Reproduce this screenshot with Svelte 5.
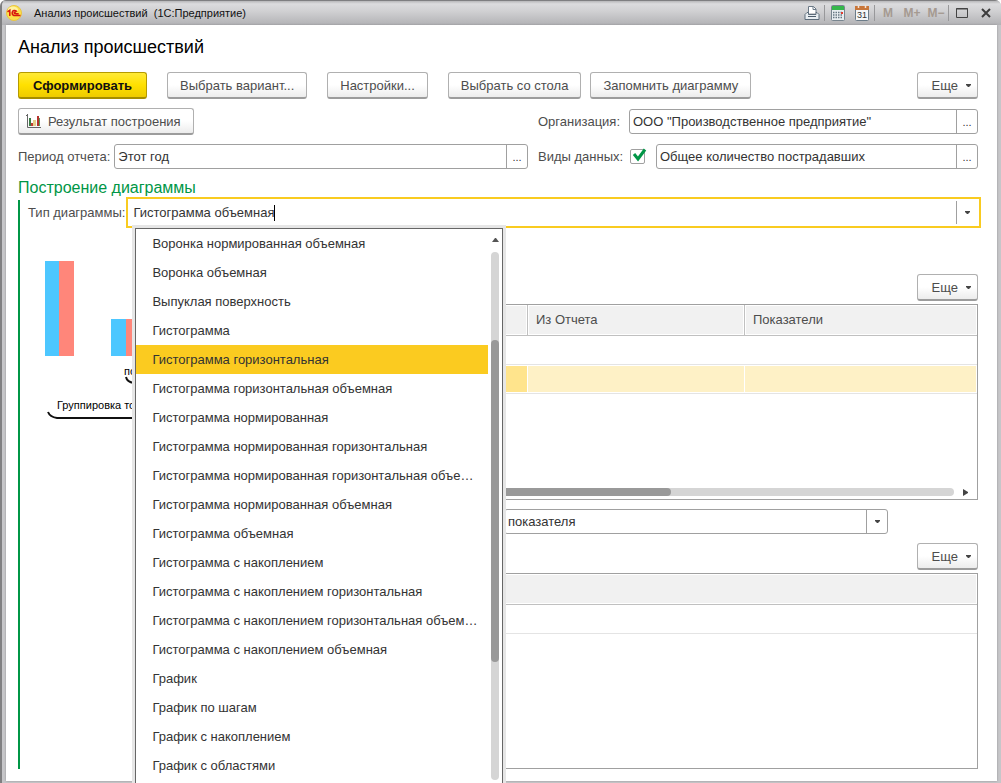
<script lang="ts">
	let chartType = $state('Гистограмма объемная');
	let organization = $state('ООО "Производственное предприятие"');
	let period = $state('Этот год');
	let dataKind = $state('Общее количество пострадавших');
	let indicator = $state('показателя');
	let useDataKind = $state(true);
	let activeIndex = $state(4);

	const chartTypes = [
		'Воронка нормированная объемная',
		'Воронка объемная',
		'Выпуклая поверхность',
		'Гистограмма',
		'Гистограмма горизонтальная',
		'Гистограмма горизонтальная объемная',
		'Гистограмма нормированная',
		'Гистограмма нормированная горизонтальная',
		'Гистограмма нормированная горизонтальная объе…',
		'Гистограмма нормированная объемная',
		'Гистограмма объемная',
		'Гистограмма с накоплением',
		'Гистограмма с накоплением горизонтальная',
		'Гистограмма с накоплением горизонтальная объем…',
		'Гистограмма с накоплением объемная',
		'График',
		'График по шагам',
		'График с накоплением',
		'График с областями'
	];

	function select(index: number) {
		activeIndex = index;
		chartType = chartTypes[index];
	}
</script>

{#snippet arrow()}
	<svg class="arrow" width="5" height="3" viewBox="0 0 5 3" aria-hidden="true">
		<path d="M0 0h5v1L3 3H2L0 1z" fill="#444" />
	</svg>
{/snippet}

{#snippet more()}
	<button class="btn more">Еще {@render arrow()}</button>
{/snippet}

<div class="window">
	<header class="titlebar">
		<svg class="logo" width="16" height="16" viewBox="0 0 16 16" aria-hidden="true">
			<circle cx="8" cy="8" r="7.5" fill="#fbe04a" stroke="#e9c440" />
			<ellipse cx="7" cy="4.5" rx="5" ry="3" fill="#fff3a0" />
			<path d="M1.500 6.800L3.800 5.200V11M10.800 6.800C10 4.800 6.200 5 6.200 8c0 2.200 1.500 2.600 3 2.600h5.300M9.800 7.500c-1-.8-1.800-.3-1.600.5.1.8 1 .8 2 .8h2.500" fill="none" stroke="#d8190f" stroke-width="1.500" />
		</svg>
		<span class="caption">Анализ происшествий&nbsp; (1С:Предприятие)</span>
		<div class="tools">
			<button class="tool" aria-label="Печать">
				<svg width="16" height="16" viewBox="0 0 16 16">
					<path d="M4.500 8V1.500h5l2.500 2.500v4" fill="#fff" stroke="#6a7886" />
					<path d="M9 1.500V4.500h3" fill="none" stroke="#6a7886" />
					<path d="M3 7.500h1.500v2h7.500v-2h1l2 2v5H1v-5z" fill="#e8edf1" stroke="#5d6c7a" />
					<path d="M4 11.500h8" stroke="#4d5c6a" />
				</svg>
			</button>
			<i class="sep"></i>
			<button class="tool" aria-label="Калькулятор">
				<svg width="14" height="16" viewBox="0 0 14 16">
					<rect x=".5" y=".5" width="13" height="15" rx="1" fill="#e8edf0" stroke="#78858f" />
					<path d="M1 1h12v4H1z" fill="#35b74b" />
					<path d="M2 7.500h10M2 10h10M2 12.500h10" stroke="#677783" stroke-width="1.500" stroke-dasharray="1.500 1" />
					<path d="M10 7h2v2h-2z" fill="#e23a2e" />
				</svg>
			</button>
			<button class="tool" aria-label="Календарь">
				<svg width="14" height="16" viewBox="0 0 14 16">
					<rect x=".5" y="1.500" width="13" height="14" rx="1" fill="#f5f7f8" stroke="#6c7c89" />
					<path d="M0 1h14v4H0z" fill="#c8763a" />
					<path d="M3.500 0v3M10.500 0v3" stroke="#f3e2d4" stroke-width="1.500" />
					<text x="7" y="13" text-anchor="middle" font-size="9" font-family="Liberation Sans, sans-serif" fill="#333">31</text>
				</svg>
			</button>
			<i class="sep"></i>
			<button class="memory">M</button>
			<button class="memory">M+</button>
			<button class="memory">M−</button>
			<i class="sep"></i>
			<button class="tool" aria-label="Развернуть">
				<svg width="12" height="10" viewBox="0 0 12 10"><path d="M.5 .5h11v9H.5z" fill="none" stroke="#444" /><path d="M0 1h12" stroke="#444" /></svg>
			</button>
			<button class="tool" aria-label="Закрыть">
				<svg width="10" height="10" viewBox="0 0 10 10"><path d="M1 1l8 8M9 1L1 9" stroke="#3c3c3c" stroke-width="2" /></svg>
			</button>
		</div>
	</header>

	<main class="form">
		<h1>Анализ происшествий</h1>

		<div class="commands">
			<button class="btn primary">Сформировать</button>
			<button class="btn">Выбрать вариант...</button>
			<button class="btn">Настройки...</button>
			<div class="pair">
				<button class="btn">Выбрать со стола</button>
				<button class="btn">Запомнить диаграмму</button>
			</div>
			{@render more()}
		</div>

		<div class="params">
			<div class="cell">
				<button class="btn result">
					<svg width="15" height="15" viewBox="0 0 15 15" aria-hidden="true">
						<path d="M1.500 0v13.500H15M0 1.500h1" fill="none" stroke="#666" />
						<path d="M3 4h2v8H3z" fill="#3b7d46" />
						<path d="M5 9h2v3H5z" fill="#c23b32" />
						<path d="M7 6h3v6H7z" fill="#e5cf8a" />
						<path d="M11 2h2v10h-2z" fill="#b5322b" />
						<path d="M13 4h1v8h-1z" fill="#5d9a5f" />
					</svg>
					Результат построения
				</button>
			</div>
			<div class="cell">
				<label class="label side" for="organization">Организация:</label>
				<div class="field">
					<input id="organization" type="text" bind:value={organization} />
					<button aria-label="Выбрать организацию">...</button>
				</div>
			</div>
			<div class="cell">
				<label class="label" for="period">Период отчета:</label>
				<div class="field">
					<input id="period" type="text" bind:value={period} />
					<button aria-label="Выбрать период">...</button>
				</div>
			</div>
			<div class="cell">
				<label class="label side" for="use-kind">Виды данных:</label>
				<span class="check">
					<input id="use-kind" type="checkbox" bind:checked={useDataKind} />
					{#if useDataKind}
						<svg width="15" height="14" viewBox="0 0 15 14" aria-hidden="true">
							<path d="M2 6l4 5 7-9.500" fill="none" stroke="#009646" stroke-width="3" />
						</svg>
					{/if}
				</span>
				<div class="field">
					<input type="text" aria-label="Вид данных" bind:value={dataKind} />
					<button aria-label="Выбрать вид данных">...</button>
				</div>
			</div>
		</div>

		<h2>Построение диаграммы</h2>

		<section class="group">
			<div class="type-row">
				<label class="label" for="chart-type">Тип диаграммы:</label>
				<div class="field focused">
					<input id="chart-type" type="text" role="combobox" aria-expanded="true" aria-controls="chart-types" bind:value={chartType} />
					<span class="caret"></span>
					<button aria-label="Открыть список">{@render arrow()}</button>

					<div class="popup">
						<ul id="chart-types" role="listbox">
							{#each chartTypes as item, i}
								<li role="option" aria-selected={i === activeIndex}>
									<button class:active={i === activeIndex} onclick={() => select(i)}>{item}</button>
								</li>
							{/each}
						</ul>
						<div class="vscroll">
							<svg width="7" height="4" viewBox="0 0 7 4" aria-hidden="true"><path d="M3 0h1l3 4H0z" fill="#555" /></svg>
							<div class="vtrack"><div class="vthumb"></div></div>
						</div>
					</div>
				</div>
			</div>

			<div class="body">
				<div class="chart">
					<svg width="240" height="180" viewBox="0 0 240 180" role="img" aria-label="Диаграмма">
						<path d="M17 11h14v95H17zM83 69h15v37H83z" fill="#4dc7ff" />
						<path d="M31 11h15v95H31zM98 69h15v37H98z" fill="#ff867a" />
						<text x="96" y="125">по</text>
						<text x="29" y="159">Группировка точек</text>
						<path d="M98 127q1 5 8 6h60M20 162q2 5 9 6h140" fill="none" stroke="#111" stroke-width="2" />
					</svg>
				</div>

				<div class="tables">
					<div class="bar">{@render more()}</div>
					<div class="grid">
						<table>
							<thead>
								<tr><th class="narrow"></th><th class="report">Из Отчета</th><th>Показатели</th></tr>
							</thead>
							<tbody>
								<tr><td></td><td></td><td></td></tr>
								<tr class="selected"><td class="current"></td><td></td><td></td></tr>
							</tbody>
						</table>
						<div class="hscroll">
							<div class="htrack"><div class="hthumb"></div></div>
							<svg width="5" height="7" viewBox="0 0 5 7" aria-hidden="true"><path d="M0 0l5 3v1L0 7z" fill="#444" /></svg>
						</div>
					</div>
					<div class="field indicator">
						<input type="text" aria-label="Показатель" bind:value={indicator} />
						<button aria-label="Открыть список показателей">{@render arrow()}</button>
					</div>
					<div class="bar">{@render more()}</div>
					<div class="grid">
						<table>
							<thead>
								<tr><th></th></tr>
							</thead>
							<tbody>
								<tr><td></td></tr>
							</tbody>
						</table>
					</div>
				</div>
			</div>
		</section>
	</main>
</div>

<style>
	:global(body) {
		background: #fff;
	}

	.window {
		box-sizing: border-box;
		min-height: 100vh;
		display: flex;
		flex-direction: column;
		overflow: hidden;
		padding: 0 4px 2px 4px;
		border-left: 2px solid #7f7f81;
		border-radius: 6px 6px 0 0;
		background: #c6c6c9;
		font-family: 'Liberation Sans', Arial, sans-serif;
		font-size: 13px;
		color: #333;
	}

	button,
	input {
		font: inherit;
		color: inherit;
		margin: 0;
		padding: 0;
		border: 0;
		background: none;
		outline: none;
	}

	.titlebar {
		box-sizing: border-box;
		height: 25px;
		margin: 0 -4px;
		padding: 0 3px 0 4px;
		display: flex;
		align-items: center;
		border-top: 1px solid #7f7f81;
		background: linear-gradient(#b8b8ba, #dcdcde 12%, #cfcfd1 45%, #b2b2b5);
	}

	.caption {
		margin-left: 12px;
		font-size: 11px;
		color: #111;
	}

	.tools {
		margin-left: auto;
		display: flex;
		align-items: center;
		height: 100%;
	}

	.tool {
		display: flex;
		justify-content: center;
		width: 24px;
	}

	.sep {
		width: 1px;
		height: 16px;
		margin-right: 1px;
		background: #98989a;
	}

	.memory {
		width: 24px;
		font-size: 12px;
		font-weight: bold;
		color: #a59a91;
	}

	.form {
		flex: 1;
		display: flex;
		flex-direction: column;
		padding: 10px 19px 12px 12px;
		background: #fff;
		box-shadow: 0 0 2px #909094;
	}

	h1 {
		margin: 0 0 13px;
		font-size: 18px;
		line-height: 24px;
		font-weight: normal;
		color: #000;
	}

	h2 {
		margin: 9px 0 2px;
		font-size: 16px;
		line-height: 20px;
		font-weight: normal;
		color: #009646;
	}

	.btn {
		box-sizing: border-box;
		height: 27px;
		padding: 0 12px;
		border: 1px solid #b0b0b0;
		border-bottom: 2px solid #9c9c9c;
		border-radius: 3px;
		background: linear-gradient(#fff 50%, #ececec);
		color: #4d4d4d;
		white-space: nowrap;
	}

	.btn.primary {
		padding: 0 14px;
		border-color: #b59b00;
		border-bottom-color: #a58d00;
		background: linear-gradient(#ffea38, #ffe000 50%, #eecb00);
		color: #111;
		font-weight: bold;
	}

	.btn.more {
		display: flex;
		align-items: center;
		gap: 8px;
		margin-left: auto;
		padding: 0 6px 0 14px;
	}

	.btn.result {
		display: flex;
		align-items: center;
		gap: 7px;
		padding-left: 7px;
	}

	.commands {
		display: flex;
		gap: 20px;
		margin-bottom: 9px;
	}

	.pair {
		display: flex;
		gap: 9px;
	}

	.params {
		display: grid;
		grid-template-columns: 51fr 44fr;
		gap: 9px 10px;
	}

	.cell {
		display: flex;
		align-items: center;
		min-width: 0;
	}

	.label {
		margin-right: 4px;
		color: #4d4d4d;
		white-space: nowrap;
	}

	.side {
		width: 87px;
	}

	.field {
		box-sizing: border-box;
		flex: 1;
		min-width: 0;
		height: 25px;
		display: flex;
		border: 1px solid #a0a0a0;
		border-radius: 3px;
		background: #fff;
	}

	.field > input {
		flex: 1;
		min-width: 0;
		padding-left: 3px;
	}

	.field > button {
		display: flex;
		align-items: center;
		justify-content: center;
		width: 21px;
		border-left: 1px solid #a0a0a0;
		font-size: 11px;
	}

	.check {
		position: relative;
		display: flex;
		margin: 0 11px 0 1px;
	}

	.check input {
		appearance: none;
		width: 15px;
		height: 15px;
		border: 1px solid #a0a0a0;
		border-radius: 2px;
	}

	.check svg {
		position: absolute;
		left: 2px;
		top: -1px;
		pointer-events: none;
	}

	.group {
		flex: 1;
		display: flex;
		flex-direction: column;
		padding-left: 8px;
		border-left: 2px solid #009646;
	}

	.type-row {
		display: flex;
		align-items: center;
	}

	.focused {
		position: relative;
		border-color: transparent;
		border-radius: 0;
		outline: 2px solid #f9cb20;
		outline-offset: 1px;
	}

	.focused > input {
		flex: none;
		field-sizing: content;
	}

	.focused > button {
		margin-left: auto;
	}

	.caret {
		width: 1px;
		margin: 4px 0 3px;
		background: #000;
	}

	.popup {
		position: absolute;
		z-index: 1;
		left: 5px;
		top: 27px;
		box-sizing: border-box;
		width: 368px;
		display: flex;
		padding-bottom: 16px;
		border: 1px solid #666;
		background: #fff;
		box-shadow: 0 0 0 3px #e6e6e6;
	}

	.popup ul {
		flex: 1;
		min-width: 0;
		margin: 0;
		padding: 0;
		list-style: none;
	}

	.popup li button {
		display: block;
		width: 100%;
		height: 29px;
		padding: 0 4px 0 16px;
		text-align: left;
		white-space: nowrap;
	}

	.popup li button.active {
		background: #fbcb20;
	}

	.vscroll {
		display: flex;
		flex-direction: column;
		align-items: center;
		width: 14px;
		padding-top: 9px;
	}

	.vtrack {
		flex: 1;
		width: 8px;
		margin-top: 10px;
		border-radius: 4px;
		background: #d5d5d5;
	}

	.vthumb {
		height: 322px;
		margin-top: 88px;
		border-radius: 4px;
		background: #999;
	}

	.body {
		flex: 1;
		display: flex;
	}

	.chart {
		flex: none;
		width: 476px;
		padding-top: 25px;
	}

	.chart text {
		font-size: 11px;
		fill: #000;
	}

	.tables {
		flex: 1;
		min-width: 0;
		display: flex;
		flex-direction: column;
		padding-top: 49px;
	}

	.bar {
		display: flex;
		margin-bottom: 3px;
	}

	.grid {
		box-sizing: border-box;
		flex: 1;
		min-height: 140px;
		display: flex;
		flex-direction: column;
		border: 1px solid #a0a0a0;
	}

	table {
		width: 100%;
		table-layout: fixed;
		border-collapse: separate;
		border-spacing: 0;
	}

	th {
		box-sizing: border-box;
		height: 31px;
		padding: 0 8px 2px;
		border-right: 1px solid #c0c0c0;
		border-bottom: 1px solid #c0c0c0;
		background: #f1f1f1;
		box-shadow: inset 0 0 0 1px #fff;
		color: #4d4d4d;
		font-weight: normal;
		text-align: left;
	}

	th:last-child {
		border-right: 0;
	}

	th.narrow {
		width: 23px;
		padding: 0;
	}

	th.report {
		width: 217px;
	}

	td {
		box-sizing: border-box;
		height: 29px;
		padding: 0;
		border-bottom: 1px solid #e4e4e4;
	}

	.selected td {
		background: #fef1c6;
		box-shadow: inset 0 1px #fff, inset 0 -1px #fff, inset -1px 0 #fff;
	}

	.selected td.current {
		background: #ffe48c;
	}

	.hscroll {
		display: flex;
		align-items: center;
		gap: 9px;
		margin-top: auto;
		padding: 0 9px 3px 0;
	}

	.htrack {
		flex: 1;
		height: 8px;
		border-radius: 0 4px 4px 0;
		background: #d5d5d5;
	}

	.hthumb {
		width: 37%;
		height: 8px;
		border-radius: 0 4px 4px 0;
		background: #999;
	}

	.indicator {
		flex: none;
		margin: 9px 90px 9px 0;
	}
</style>
